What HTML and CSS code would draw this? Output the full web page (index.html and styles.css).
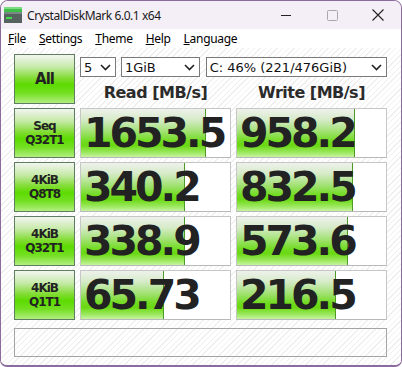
FILE: index.html
```html
<!DOCTYPE html>
<html lang="en">

<head>
    <meta charset="UTF-8">
    <title>CrystalDiskMark 6.0.1 x64</title>
    <link rel="stylesheet" href="styles.css">
</head>

<body>
    <div class="window">
        <div class="titlebar">
            <svg class="app-icon" width="18" height="16" viewBox="0 0 18 16">
                <rect x="0" y="0" width="18" height="5" fill="#3fbf4a" />
                <rect x="0" y="0" width="18" height="2" fill="#7ddc7f" />
                <rect x="0" y="5" width="18" height="11" fill="#56625f" />
                <rect x="0" y="5" width="18" height="2" fill="#7b8784" />
                <rect x="2" y="10" width="6" height="2" fill="#3fdf4a" />
            </svg>
            <span class="title">CrystalDiskMark 6.0.1 x64</span>
            <div class="controls">
                <div class="ctl">
                    <svg width="10" height="10" viewBox="0 0 10 10"><line x1="0" y1="5.5" x2="10" y2="5.5" stroke="#222" stroke-width="1" /></svg>
                </div>
                <div class="ctl">
                    <svg width="11" height="11" viewBox="0 0 11 11"><rect x="0.5" y="0.5" width="10" height="10" rx="1" fill="none" stroke="#a8a8a8" stroke-width="1" /></svg>
                </div>
                <div class="ctl">
                    <svg width="12" height="12" viewBox="0 0 12 12"><path d="M0.5 0.5 L11.5 11.5 M11.5 0.5 L0.5 11.5" stroke="#222" stroke-width="1.1" /></svg>
                </div>
            </div>
        </div>

        <div class="menubar">
            <span><u>F</u>ile</span>
            <span><u>S</u>ettings</span>
            <span><u>T</u>heme</span>
            <span><u>H</u>elp</span>
            <span><u>L</u>anguage</span>
        </div>

        <div class="main">
            <div class="grid">
                <div class="label all">All</div>
                <div class="top">
                    <div class="selects">
                        <div class="select sel-count"><span>5</span>
                            <svg width="11" height="7" viewBox="0 0 11 7"><path d="M1 1 L5.5 5.5 L10 1" fill="none" stroke="#222" stroke-width="1.6" /></svg>
                        </div>
                        <div class="select sel-size"><span>1GiB</span>
                            <svg width="11" height="7" viewBox="0 0 11 7"><path d="M1 1 L5.5 5.5 L10 1" fill="none" stroke="#222" stroke-width="1.6" /></svg>
                        </div>
                        <div class="select sel-drive"><span>C: 46% (221/476GiB)</span>
                            <svg width="11" height="7" viewBox="0 0 11 7"><path d="M1 1 L5.5 5.5 L10 1" fill="none" stroke="#222" stroke-width="1.6" /></svg>
                        </div>
                    </div>
                    <div class="heads">
                        <div>Read [MB/s]</div>
                        <div>Write [MB/s]</div>
                    </div>
                </div>

                <div class="label">Seq<br>Q32T1</div>
                <div class="cell"><div class="fill" style="width: 84%"></div><span class="num">1653.5</span></div>
                <div class="cell"><div class="fill" style="width: 79.2%"></div><span class="num">958.2</span></div>

                <div class="label">4KiB<br>Q8T8</div>
                <div class="cell"><div class="fill" style="width: 69.8%"></div><span class="num">340.2</span></div>
                <div class="cell"><div class="fill" style="width: 77.9%"></div><span class="num">832.5</span></div>

                <div class="label">4KiB<br>Q32T1</div>
                <div class="cell"><div class="fill" style="width: 69.6%"></div><span class="num">338.9</span></div>
                <div class="cell"><div class="fill" style="width: 74.5%"></div><span class="num">573.6</span></div>

                <div class="label">4KiB<br>Q1T1</div>
                <div class="cell"><div class="fill" style="width: 55.7%"></div><span class="num">65.73</span></div>
                <div class="cell"><div class="fill" style="width: 66.4%"></div><span class="num">216.5</span></div>
            </div>

            <div class="status"></div>
        </div>
    </div>
</body>

</html>
```

FILE: styles.css
```css
body {
    margin: 0;
    padding: 0;
    background-color: #fff;
    font-family: "Noto Sans", "DejaVu Sans", sans-serif;
    overflow: hidden;
}

.window {
    width: 402px;
    height: 367px;
    box-sizing: border-box;
    border: 1px solid #8c6c9c;
    border-bottom-width: 2px;
    border-radius: 8px 8px 7px 7px;
    overflow: hidden;
    display: flex;
    flex-direction: column;
    background-color: #fff;
}

/* title bar */
.titlebar {
    height: 28px;
    background-color: #f4eef6;
    display: flex;
    align-items: center;
    padding-left: 3px;
}

.app-icon {
    margin-right: 5px;
    margin-top: -1px;
}

.title {
    font-size: 12px;
    letter-spacing: -0.45px;
    color: #1a1a1a;
    flex: 1;
}

.controls {
    display: flex;
    height: 100%;
}

.ctl {
    width: 46px;
    display: flex;
    align-items: center;
    justify-content: center;
}

/* menu */
.menubar {
    height: 19px;
    background-color: #fff;
    display: flex;
    align-items: center;
    gap: 13px;
    padding-left: 7px;
    font-size: 12px;
    letter-spacing: -0.3px;
    color: #000;
}

/* main area */
.main {
    flex: 1;
    padding: 6px 14px 0 13px;
    background: repeating-linear-gradient(135deg, #ffffff 0 3px, #efefef 3px 4px);
}

.grid {
    display: grid;
    grid-template-columns: 61px 151px 151px;
    grid-auto-rows: 50px;
    column-gap: 5px;
    row-gap: 4px;
}

.label {
    box-sizing: border-box;
    border: 1px solid #5f7d5f;
    background: linear-gradient(to bottom, #f2f5f0 0%, #c6eaa8 25%, #82dc34 48%, #5cdb00 62%, #74e024 80%, #b2ee80 100%);
    display: flex;
    align-items: center;
    justify-content: center;
    text-align: center;
    font-family: "DejaVu Sans", sans-serif;
    font-weight: bold;
    font-size: 12px;
    line-height: 14px;
    letter-spacing: -1px;
    color: #222;
}

.label.all {
    font-size: 15px;
    letter-spacing: -1px;
}

.top {
    grid-column: span 2;
    display: flex;
    flex-direction: column;
}

.selects {
    display: flex;
    margin-top: 3px;
    height: 20px;
}

.select {
    box-sizing: border-box;
    height: 20px;
    border: 1px solid #7a7a7a;
    background-color: #fff;
    display: flex;
    align-items: center;
    justify-content: space-between;
    padding: 0 4px 0 3px;
    font-family: "DejaVu Sans", sans-serif;
    font-size: 13px;
    color: #111;
}

.sel-count {
    width: 36px;
    margin-right: 5px;
}

.sel-size {
    width: 79px;
    margin-right: 6px;
}

.sel-drive {
    width: 182px;
}

.heads {
    flex: 1;
    display: grid;
    grid-template-columns: 151px 151px;
    column-gap: 5px;
    align-items: center;
    text-align: center;
    font-family: "DejaVu Sans", sans-serif;
    font-weight: bold;
    font-size: 16px;
    letter-spacing: -0.5px;
    color: #2b2b2b;
    padding-top: 4px;
}

.cell {
    box-sizing: border-box;
    border: 1px solid #c6c6c6;
    border-bottom-color: #b8b8b8;
    background-color: #fff;
    display: grid;
    grid-template-areas: "stack";
    align-items: center;
}

.fill {
    grid-area: stack;
    height: 100%;
    box-sizing: border-box;
    border-right: 1px solid #4f9a26;
    background: linear-gradient(to bottom, #eef1ec 0%, #d6ebc8 22%, #a6e27a 45%, #72dc22 66%, #6ad812 76%, #9ae85c 90%, #c6f3a0 100%);
}

.num {
    grid-area: stack;
    padding-left: 3px;
    font-family: "DejaVu Sans", sans-serif;
    font-weight: bold;
    font-size: 41px;
    line-height: 1;
    letter-spacing: -3px;
    color: #222;
    margin-top: 1px;
}

.status {
    margin-top: 8px;
    height: 29px;
    box-sizing: border-box;
    border: 1px solid #a4a4a4;
}
```
